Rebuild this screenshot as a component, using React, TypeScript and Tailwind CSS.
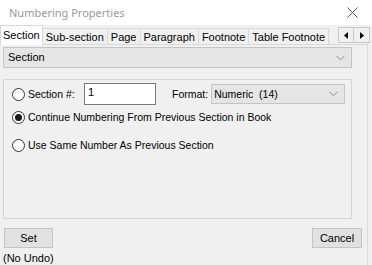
import React from "react";

function Radio({ checked }: { checked?: boolean }) {
  return (
    <span className="w-[13px] h-[13px] rounded-full border border-[#333333] bg-white flex items-center justify-center shrink-0">
      {checked && <span className="w-[7px] h-[7px] rounded-full bg-[#1a1a1a]" />}
    </span>
  );
}

function Chevron() {
  return (
    <svg width="9" height="6" viewBox="0 0 9 6" fill="none">
      <path d="M0.5 0.8 L4.5 4.8 L8.5 0.8" stroke="#8a8a8a" strokeWidth="1" />
    </svg>
  );
}

export default function App() {
  const tabs = ["Sub-section", "Page", "Paragraph", "Footnote", "Table Footnote"];
  return (
    <div className="w-[372px] h-[265px] bg-[#f0f0f0] flex flex-col overflow-hidden font-['Liberation_Sans',Arial,sans-serif] text-[11px] text-black leading-none">
      {/* Title bar */}
      <div className="h-[25px] bg-white flex items-center justify-between pl-[9px] pr-[14px] shrink-0">
        <span className="font-['Noto_Sans',sans-serif] text-[11px] text-[#999999]">Numbering Properties</span>
        <svg width="11" height="11" viewBox="0 0 11 11">
          <path d="M0.5 0.5 L10.5 10.5 M10.5 0.5 L0.5 10.5" stroke="#555" strokeWidth="1" />
        </svg>
      </div>
      {/* Tabs */}
      <div className="h-[20px] flex items-end relative shrink-0">
        <div className="absolute left-0 right-[4px] bottom-0 h-px bg-[#d9d9d9]" />
        <div className="relative z-10 h-[20px] bg-white border border-b-0 border-[#d9d9d9] px-[2px] flex items-center">
          Section
        </div>
        {tabs.map((t) => (
          <div
            key={t}
            className="h-[17px] border border-b-0 border-[#d9d9d9] -ml-px bg-[#f0f0f0] px-[3px] flex items-center"
          >
            {t}
          </div>
        ))}
        <div className="ml-auto mr-[2px] mb-[1px] flex self-center mt-[1px]">
          <div className="w-[16px] h-[16px] border border-[#c8c8c8] bg-[#f0f0f0] flex items-center justify-center">
            <svg width="4" height="7" viewBox="0 0 4 7"><path d="M4 0 L0 3.5 L4 7 Z" fill="#000" /></svg>
          </div>
          <div className="w-[16px] h-[16px] border border-l-0 border-[#c8c8c8] bg-[#f0f0f0] flex items-center justify-center">
            <svg width="4" height="7" viewBox="0 0 4 7"><path d="M0 0 L4 3.5 L0 7 Z" fill="#000" /></svg>
          </div>
        </div>
      </div>
      {/* Page */}
      <div className="flex-1 flex flex-col pl-[3px] pr-[15px] border-r border-[#dadada] mr-[4px]">
        <div className="mt-[2px] h-[21px] bg-[#e5e5e5] border border-[#c4c4c4] flex items-center justify-between pl-[4px] pr-[6px]">
          <span>Section</span>
          <Chevron />
        </div>
        <div className="mt-[11px] h-[140px] border border-[#d5d5d5] flex flex-col pl-[8px] pr-[6px] text-[10.5px]">
          <div className="mt-[3px] h-[22px] flex items-center">
            <Radio />
            <span className="ml-[3px] w-[56px]">Section #:</span>
            <div className="w-[72px] h-[22px] bg-white border border-[#7a7a7a] pl-[3px] pt-[3px] text-[11px]">1</div>
            <span className="ml-[16px]">Format:</span>
            <div className="ml-[3px] flex-1 h-[20px] bg-[#e5e5e5] border border-[#c4c4c4] flex items-center justify-between pl-[2px] pr-[6px]">
              <span>Numeric&nbsp; (14)</span>
              <Chevron />
            </div>
          </div>
          <div className="mt-[5px] h-[14px] flex items-center">
            <Radio checked />
            <span className="ml-[3px]">Continue Numbering From Previous Section in Book</span>
          </div>
          <div className="mt-[14px] h-[14px] flex items-center">
            <Radio />
            <span className="ml-[3px]">Use Same Number As Previous Section</span>
          </div>
        </div>
        <div className="mt-[9px] flex justify-between">
          <div className="ml-[1px] w-[49px] h-[20px] bg-[#e1e1e1] border border-[#c4c4c4] flex items-center justify-center">Set</div>
          <div className="mr-[-10px] w-[50px] h-[20px] bg-[#e1e1e1] border border-[#c4c4c4] flex items-center justify-center">Cancel</div>
        </div>
        <div className="mt-[5px]">(No Undo)</div>
      </div>
    </div>
  );
}
